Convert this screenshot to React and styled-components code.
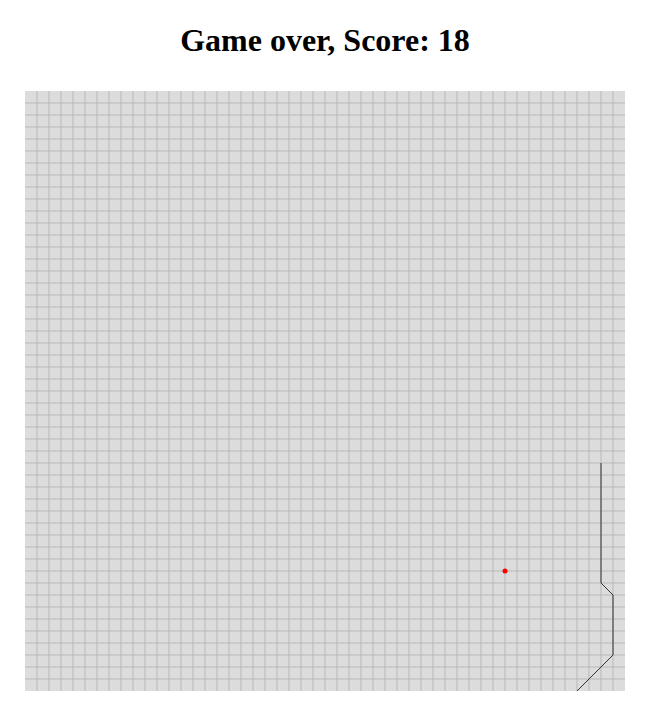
import React from 'react';
import styled, { createGlobalStyle } from 'styled-components';

const CELL = 12;
const SIZE = 50;
const snake = [
  [48, 31],
  [48, 41],
  [49, 42],
  [49, 47],
  [46, 50],
];
const food = [40, 40];

const GlobalStyle = createGlobalStyle`
  body {
    margin: 8px;
    background: #fff;
    font-family: "Liberation Serif", "Times New Roman", serif;
  }
`;

const Page = styled.div`
  display: flex;
  flex-direction: column;
  align-items: center;
  padding-left: 2px;
`;

const Title = styled.h1`
  font-size: 32px;
  font-weight: bold;
  margin: 14px 0 32px;
  color: #000;
`;

const Board = styled.svg`
  display: block;
  background: #dcdcdc;
`;

function Grid() {
  const lines = [];
  const px = CELL * SIZE;
  for (let i = 1; i < SIZE; i++) {
    const p = i * CELL;
    lines.push(<line key={'v' + i} x1={p} y1={0} x2={p} y2={px} />);
    lines.push(<line key={'h' + i} x1={0} y1={p} x2={px} y2={p} />);
  }
  return (
    <g stroke="#b9b9b9" strokeWidth="1">
      {lines}
    </g>
  );
}

export default function App() {
  const px = CELL * SIZE;
  const points = snake.map(([x, y]) => `${x * CELL},${y * CELL}`).join(' ');
  return (
    <Page>
      <GlobalStyle />
      <Title>Game over, Score: 18</Title>
      <Board width={px} height={px} viewBox={`0 0 ${px} ${px}`}>
        <Grid />
        <polyline points={points} fill="none" stroke="#333" strokeWidth="1" />
        <circle cx={food[0] * CELL} cy={food[1] * CELL} r="2.5" fill="red" />
      </Board>
    </Page>
  );
}
